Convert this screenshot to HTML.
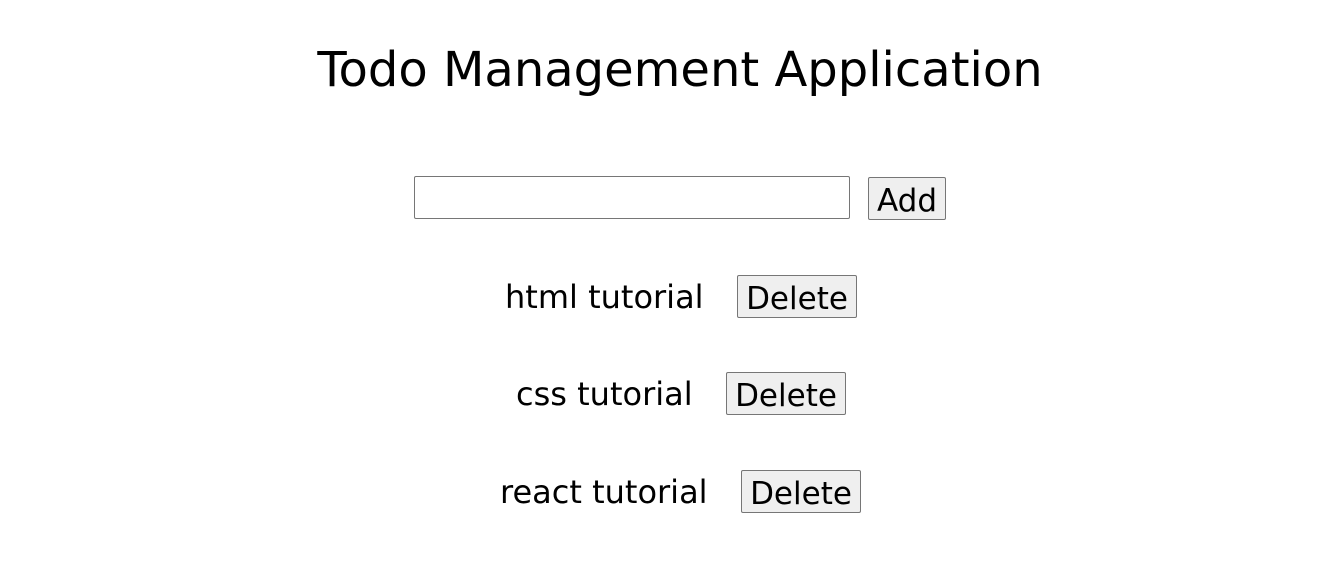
<!DOCTYPE html>
<html><head><style>
body{margin:0;width:1340px;height:574px;background:#fff;font-family:"DejaVu Sans",Verdana,sans-serif;color:#000;position:relative;overflow:hidden}
.a{position:absolute;white-space:nowrap}
h1{position:absolute;margin:0;left:0;width:1360px;text-align:center;top:41px;font-size:48px;font-weight:normal;line-height:58px}
.in{left:414px;top:176px;width:434px;height:41px;border:1px solid #767676;border-radius:2px}
.b{border:1px solid #767676;background:#efefef;border-radius:2px;font-size:31px;line-height:46px;text-align:center;box-sizing:border-box;height:43px}
.t{font-size:32px;line-height:43px}
</style></head><body>
<h1>Todo Management Application</h1>
<div class="a in"></div>
<div class="a b" style="left:868px;top:177px;width:78px">Add</div>
<div class="a t" style="left:505px;top:276px">html tutorial</div>
<div class="a b" style="left:737px;top:275px;width:120px">Delete</div>
<div class="a t" style="left:516px;top:373px">css tutorial</div>
<div class="a b" style="left:726px;top:372px;width:120px">Delete</div>
<div class="a t" style="left:500px;top:471px">react tutorial</div>
<div class="a b" style="left:741px;top:470px;width:120px">Delete</div>
</body></html>
